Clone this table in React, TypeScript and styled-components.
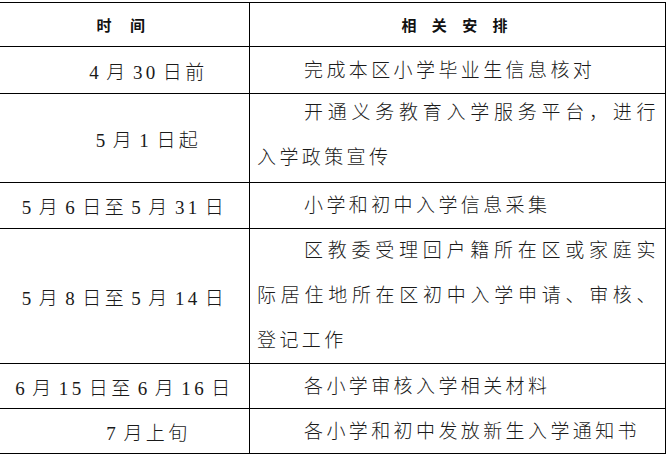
import React from "react";
import styled, { createGlobalStyle } from "styled-components";

const Global = createGlobalStyle`
  html, body { margin: 0; padding: 0; background: #fff; }
  body { font-family: "Liberation Serif", "Noto Sans CJK SC", serif; }
`;

const Table = styled.div`
  margin: 2px 0 0 -1px;
  width: 667px;
  box-sizing: border-box;
  border: 1px solid #000;
  background: #000;
  display: grid;
  grid-template-columns: 249px 415px;
  grid-template-rows: 43px 46px 88px 45px 134px 44px 44px;
  gap: 1px;
`;

const Cell = styled.div`
  background: #fff;
  display: flex;
  align-items: center;
  overflow: hidden;
`;

const HeadCell = styled(Cell)<{ $ls: number }>`
  justify-content: center;
  font-family: "Noto Sans CJK SC", sans-serif;
  font-weight: 700;
  font-size: 15px;
  color: #111;
  letter-spacing: ${(p) => p.$ls}px;
  white-space: pre;
`;

const DateCell = styled(Cell)<{ $shift: number }>`
  justify-content: center;
  box-sizing: border-box;
  padding-left: ${(p) => p.$shift}px;
  font-family: "Liberation Serif", "Noto Sans CJK SC", serif;
  font-weight: 300;
  font-size: 19px;
  letter-spacing: 3.4px;
  word-spacing: -4px;
  color: #1a1a1a;
  white-space: pre;
`;

const TaskCell = styled(Cell)<{ $lift: number }>`
  box-sizing: border-box;
  padding: 0 6px ${(p) => p.$lift}px 7px;
`;

const TaskText = styled.p`
  margin: 0;
  width: 100%;
  font-family: "Liberation Serif", "Noto Sans CJK SC", serif;
  font-weight: 300;
  font-size: 19px;
  line-height: 45px;
  letter-spacing: 3.4px;
  text-indent: 47px;
  text-align: justify;
  color: #1a1a1a;
`;

const rows: { date: string; shift: number; lift: number; task: string }[] = [
  { date: "4 月 30 日前", shift: 48, lift: 0, task: "完成本区小学毕业生信息核对" },
  { date: "5 月 1 日起", shift: 48, lift: 6, task: "开通义务教育入学服务平台，进行入学政策宣传" },
  { date: "5 月 6 日至 5 月 31 日", shift: 0, lift: 0, task: "小学和初中入学信息采集" },
  {
    date: "5 月 8 日至 5 月 14 日",
    shift: 0,
    lift: 2,
    task: "区教委受理回户籍所在区或家庭实际居住地所在区初中入学申请、审核、登记工作",
  },
  { date: "6 月 15 日至 6 月 16 日", shift: 0, lift: 0, task: "各小学审核入学相关材料" },
  { date: "7 月上旬", shift: 48, lift: 0, task: "各小学和初中发放新生入学通知书" },
];

export default function App() {
  return (
    <>
      <Global />
      <Table>
        <HeadCell $ls={7.5}>时 间</HeadCell>
        <HeadCell $ls={6}>相 关 安 排</HeadCell>
        {rows.map((r) => (
          <React.Fragment key={r.date}>
            <DateCell $shift={r.shift}>{r.date}</DateCell>
            <TaskCell $lift={r.lift}>
              <TaskText>{r.task}</TaskText>
            </TaskCell>
          </React.Fragment>
        ))}
      </Table>
    </>
  );
}
